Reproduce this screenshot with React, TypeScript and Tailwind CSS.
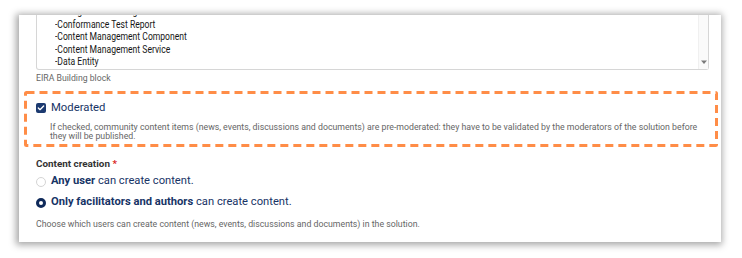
import { Check } from 'lucide-react';

const textareaLines = [
  '-Configuration Management',
  '-Conformance Test Report',
  '-Content Management Component',
  '-Content Management Service',
  '-Data Entity',
];

function DashedHighlight({ children }: { children: React.ReactNode }) {
  return (
    <div className="relative ml-[5px] mt-[8px] h-[56px] w-[694px]">
      <svg className="pointer-events-none absolute inset-0" width="694" height="56" aria-hidden="true">
        <rect
          x="1.5"
          y="1.5"
          width="691"
          height="53"
          rx="1"
          fill="none"
          stroke="#ff8d47"
          strokeWidth="3"
          strokeDasharray="8 5"
        />
      </svg>
      {children}
    </div>
  );
}

function Radio({ checked }: { checked?: boolean }) {
  return checked ? (
    <span className="box-border inline-block size-[10px] shrink-0 rounded-full border-[3px] border-[#0f2a5a] bg-white" />
  ) : (
    <span className="box-border inline-block size-[10px] shrink-0 rounded-full border border-[#d4d4d4] bg-white" />
  );
}

export default function App() {
  return (
    <div className="h-[258px] w-[742px] overflow-hidden bg-white pt-[15px] font-['Roboto',sans-serif]">
      <div className="ml-[19px] h-[227px] w-[702px] overflow-hidden bg-white shadow-[-1px_1px_7px_2px_rgba(0,0,0,0.35)]">
        {/* multi-select list, scrolled so the first item is cut */}
        <div className="-mt-[10px] ml-[17px] flex w-[673px] rounded-b-[3px] border border-t-0 border-[#d6d6d6]">
          <div className="flex-1 pl-[18px] pt-[1px] text-[11px] leading-[12.5px] text-[#161616]">
            {textareaLines.map(line => (
              <div key={line} className="origin-left scale-x-[0.78] whitespace-nowrap">
                {line}
              </div>
            ))}
          </div>
          <div className="flex w-[10px] flex-col justify-end border-l border-[#f0f0f0] bg-[#fafafa] pb-[4px]">
            <svg width="10" height="5" viewBox="0 0 10 5" aria-hidden="true">
              <path d="M2 0.5h6L5 4z" fill="#7a7a7a" />
            </svg>
          </div>
        </div>
        <div className="ml-[17px] mt-[3px] text-[8.7px] leading-[10px] text-[#666]">EIRA Building block</div>

        <DashedHighlight>
          <div className="pl-[12px] pt-[10px]">
            <div className="flex items-center gap-[5px]">
              <span className="flex size-[10px] items-center justify-center rounded-[2px] bg-[#1c3a70]">
                <Check className="size-[8px] text-white" strokeWidth={4} />
              </span>
              <span className="text-[11.3px] leading-[14px] text-[#173466]">Moderated</span>
            </div>
            <p className="ml-[14px] mt-[8px] text-[8.75px] leading-[9.5px] text-[#666]">
              If checked, community content items (news, events, discussions and documents) are pre-moderated: they
              have to be validated by the moderators of the solution before
              <br />
              they will be published.
            </p>
          </div>
        </DashedHighlight>

        <div className="ml-[17px] mt-[11px]">
          <div className="text-[9.9px] font-bold leading-[11px] text-[#333]">
            Content creation <span className="text-[#d9261c]">*</span>
          </div>
          <div className="mt-[5px] flex h-[16px] items-center gap-[5px] text-[11.2px] text-[#173466]">
            <Radio />
            <span>
              <span className="font-bold">Any user</span> can create content.
            </span>
          </div>
          <div className="mt-[5px] flex h-[16px] items-center gap-[5px] text-[11.2px] text-[#173466]">
            <Radio checked />
            <span>
              <span className="font-bold">Only facilitators and authors</span> can create content.
            </span>
          </div>
          <div className="mt-[8px] text-[8.75px] leading-[10px] text-[#666]">
            Choose which users can create content (news, events, discussions and documents) in the solution.
          </div>
        </div>
      </div>
    </div>
  );
}
